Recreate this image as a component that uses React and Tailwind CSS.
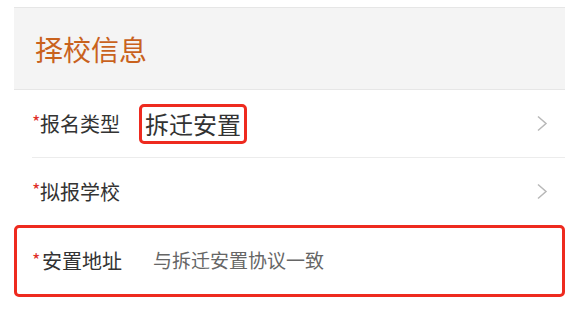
import React from "react";

const Chevron = () => (
  <svg width="12" height="17" viewBox="0 0 12 17" className="shrink-0">
    <polyline points="2,1.5 10,8.5 2,15.5" fill="none" stroke="#b8b8b8" strokeWidth="1.5" />
  </svg>
);

const Label = ({ text, width, gap }) => (
  <div className={`flex items-center shrink-0 ${width}`}>
    <span className={`text-[#e0302a] text-[18px] leading-none -mt-[5px] ${gap}`}>*</span>
    <span className="text-[20px] leading-none text-[#333]">{text}</span>
  </div>
);

const App = () => {
  return (
    <div
      className="w-[577px] h-[309px] bg-white pt-[7px] overflow-hidden"
      style={{ fontFamily: '"Noto Sans CJK SC", "Noto Sans", sans-serif' }}
    >
      <div className="ml-[14px] w-[551px]">
        {/* Section header */}
        <div className="h-[83px] bg-[#f4f4f4] border-t border-b border-[#e6e6e6] flex items-center pl-[21px]">
          <span className="text-[28px] text-[#c9621d] leading-none">择校信息</span>
        </div>

        {/* Registration type */}
        <div className="ml-[18px] h-[68px] border-b border-[#ececec] flex items-center pr-[17px]">
          <Label text="报名类型" width="w-[107px]" gap="w-[8px]" />
          <div className="border-[3px] border-[#ee2a1f] rounded-[5px] h-[40px] px-[3px] flex items-center">
            <span className="text-[24px] leading-none text-[#333]">拆迁安置</span>
          </div>
          <div className="flex-1" />
          <Chevron />
        </div>

        {/* School */}
        <div className="ml-[18px] h-[67px] flex items-center pr-[17px]">
          <Label text="拟报学校" width="w-[107px]" gap="w-[8px]" />
          <div className="flex-1" />
          <Chevron />
        </div>

        {/* Address */}
        <div className="h-[72px] border-[3px] border-[#ee2a1f] rounded-[5px] flex items-center pl-[15px]">
          <Label text="安置地址" width="w-[121px]" gap="w-[10px]" />
          <span className="text-[19px] leading-none text-[#666] -mt-[4px]">与拆迁安置协议一致</span>
        </div>
      </div>
    </div>
  );
};

export default App;
